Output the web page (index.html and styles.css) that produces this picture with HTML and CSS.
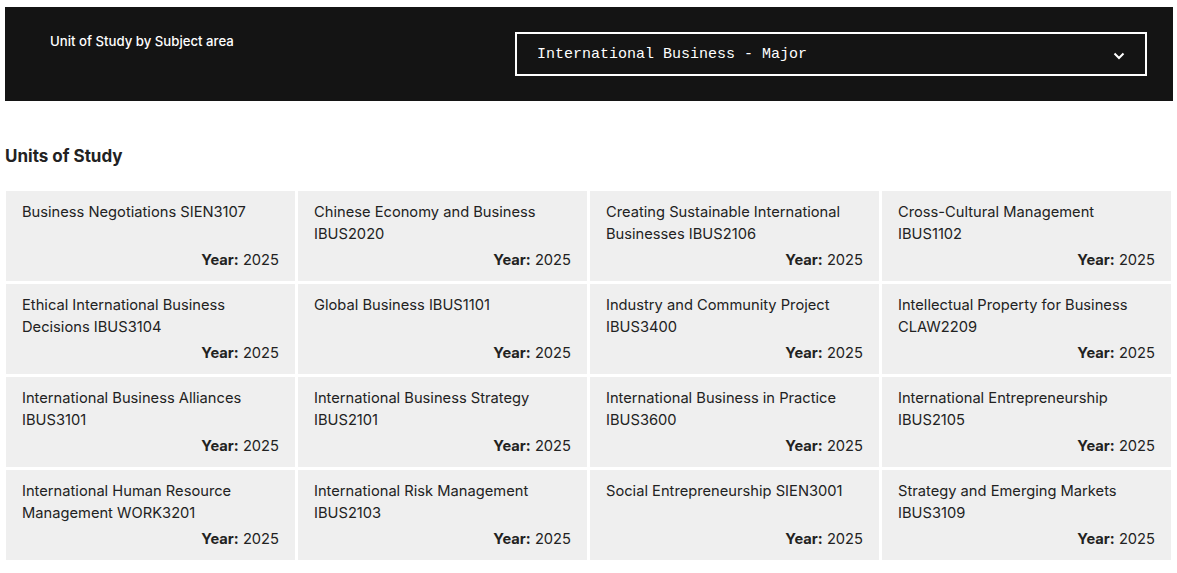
FILE: index.html
```html
<!DOCTYPE html>
<html lang="en">
<head>
<meta charset="utf-8">
<title>Units of Study</title>
<link rel="stylesheet" href="styles.css">
</head>
<body>
<div class="page">
  <div class="filter-bar">
    <div class="filter-label">Unit of Study by Subject area</div>
    <div class="select">
      <span class="select-text">International Business - Major</span>
      <svg class="chevron" width="12" height="8" viewBox="0 0 12 8"><path d="M1.5 1.5 L6 6 L10.5 1.5" fill="none" stroke="#fff" stroke-width="2"/></svg>
    </div>
  </div>
  <h2 class="section-title">Units of Study</h2>
  <div class="grid">
    <div class="card"><div class="card-title">Business Negotiations SIEN3107</div><div class="card-year"><b>Year:</b> 2025</div></div>
    <div class="card"><div class="card-title">Chinese Economy and Business IBUS2020</div><div class="card-year"><b>Year:</b> 2025</div></div>
    <div class="card"><div class="card-title">Creating Sustainable International Businesses IBUS2106</div><div class="card-year"><b>Year:</b> 2025</div></div>
    <div class="card"><div class="card-title">Cross-Cultural Management IBUS1102</div><div class="card-year"><b>Year:</b> 2025</div></div>
    <div class="card"><div class="card-title">Ethical International Business Decisions IBUS3104</div><div class="card-year"><b>Year:</b> 2025</div></div>
    <div class="card"><div class="card-title">Global Business IBUS1101</div><div class="card-year"><b>Year:</b> 2025</div></div>
    <div class="card"><div class="card-title">Industry and Community Project IBUS3400</div><div class="card-year"><b>Year:</b> 2025</div></div>
    <div class="card"><div class="card-title">Intellectual Property for Business CLAW2209</div><div class="card-year"><b>Year:</b> 2025</div></div>
    <div class="card"><div class="card-title">International Business Alliances IBUS3101</div><div class="card-year"><b>Year:</b> 2025</div></div>
    <div class="card"><div class="card-title">International Business Strategy IBUS2101</div><div class="card-year"><b>Year:</b> 2025</div></div>
    <div class="card"><div class="card-title">International Business in Practice IBUS3600</div><div class="card-year"><b>Year:</b> 2025</div></div>
    <div class="card"><div class="card-title">International Entrepreneurship IBUS2105</div><div class="card-year"><b>Year:</b> 2025</div></div>
    <div class="card"><div class="card-title">International Human Resource Management WORK3201</div><div class="card-year"><b>Year:</b> 2025</div></div>
    <div class="card"><div class="card-title">International Risk Management IBUS2103</div><div class="card-year"><b>Year:</b> 2025</div></div>
    <div class="card"><div class="card-title">Social Entrepreneurship SIEN3001</div><div class="card-year"><b>Year:</b> 2025</div></div>
    <div class="card"><div class="card-title">Strategy and Emerging Markets IBUS3109</div><div class="card-year"><b>Year:</b> 2025</div></div>
  </div>
</div>
</body>
</html>
```
FILE: styles.css
```css
* { box-sizing: border-box; }
html, body { margin: 0; padding: 0; background: #fff; }
body { font-family: "Inter", "Noto Sans", sans-serif; color: #222; }
.page { padding: 7px 0 0 5px; width: 1173px; }
.filter-bar {
  background: #141414;
  height: 94px;
  display: flex;
  align-items: flex-start;
  padding: 25px 26px 0 45px;
}
.filter-label {
  color: #fff;
  font-size: 13.2px;
  font-weight: 500;
  width: 465px;
  padding-top: 1px;
}
.select {
  width: 632px;
  height: 44px;
  border: 2px solid #fff;
  display: flex;
  align-items: center;
  justify-content: space-between;
  padding: 0 20px 0 20px;
}
.select-text {
  font-family: "Liberation Mono", "DejaVu Sans Mono", monospace;
  color: #fff;
  font-size: 15px;
  font-weight: 500;
}
.chevron { margin-top: 4px; }
.section-title {
  margin: 0;
  padding-top: 43px;
  font-size: 17px;
  font-weight: 700;
  line-height: 24px;
  color: #222;
}
.grid {
  margin: 23px 0 0 1px;
  display: grid;
  grid-template-columns: repeat(4, 289px);
  grid-auto-rows: 90px;
  gap: 3px;
}
.card {
  background: #efefef;
  padding: 10px 16px 10px 16px;
  display: flex;
  flex-direction: column;
  font-size: 14.7px;
  line-height: 22px;
  color: #222;
}
.card-title { flex: 1; }
.card-year { text-align: right; }
.card-year b { font-weight: 700; }
```
